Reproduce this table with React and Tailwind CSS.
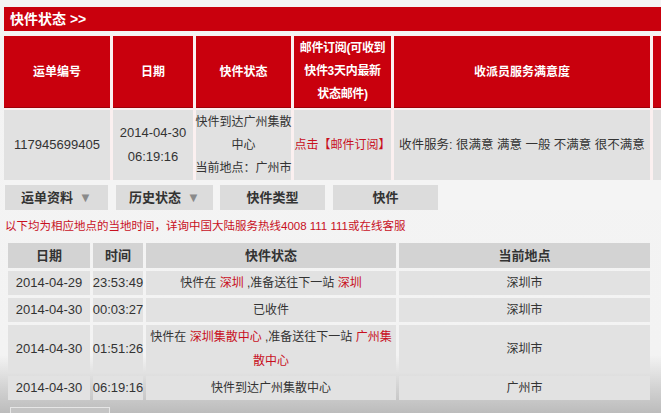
import React from 'react'

const cjk = { fontFamily: '"Liberation Sans", "Noto Sans CJK SC", sans-serif' }

const history = [
  { date: '2014-04-29', time: '23:53:49', status: <span>快件在 <span className="text-[#c8101e]">深圳</span> ,准备送往下一站 <span className="text-[#c8101e]">深圳</span></span>, place: '深圳市', h: 'h-[24px]' },
  { date: '2014-04-30', time: '00:03:27', status: <span>已收件</span>, place: '深圳市', h: 'h-[24px]' },
  { date: '2014-04-30', time: '01:51:26', status: <span>快件在 <span className="text-[#c8101e]">深圳集散中心</span> ,准备送往下一站 <span className="text-[#c8101e]">广州集<br />散中心</span></span>, place: '深圳市', h: 'h-[48px]' },
  { date: '2014-04-30', time: '06:19:16', status: <span>快件到达广州集散中心</span>, place: '广州市', h: 'h-[24px]' },
]

function App() {
  return (
    <div style={cjk} className="w-[661px] h-[413px] overflow-hidden bg-[linear-gradient(to_bottom,#f4f4f4_0%,#f3f3f3_86%,#d2d2d2_94%,#bcbcbc_100%)] text-[12px] text-[#333]">
      <div className="pt-[7px] pl-[4px]">
        <div className="h-[24px] bg-[#c9000d] text-white font-bold text-[14px] leading-[24px] pl-[6px]">快件状态 &gt;&gt;</div>

        <div className="mt-[4px] bg-[#fbf0f0] grid grid-cols-[106px_80px_95px_97px_256px_1fr] gap-x-[3px] gap-y-[2px] pt-[1px]">
          <div className="h-[72px] bg-[#c9000d] border-b border-[#9e0008] text-white font-bold flex items-center justify-center">运单编号</div>
          <div className="h-[72px] bg-[#c9000d] border-b border-[#9e0008] text-white font-bold flex items-center justify-center">日期</div>
          <div className="h-[72px] bg-[#c9000d] border-b border-[#9e0008] text-white font-bold flex items-center justify-center">快件状态</div>
          <div className="h-[72px] bg-[#c9000d] border-b border-[#9e0008] text-white font-bold flex items-center justify-center text-center leading-[23px] whitespace-nowrap tracking-[-0.3px]"><span>邮件订阅(可收到<br />快件3天内最新<br />状态邮件)</span></div>
          <div className="h-[72px] bg-[#c9000d] border-b border-[#9e0008] text-white font-bold flex items-center justify-center">收派员服务满意度</div>
          <div className="h-[72px] bg-[#c9000d] border-b border-[#9e0008]"></div>

          <div className="h-[70px] bg-[#e1e1e1] flex items-center justify-center text-[13px]">117945699405</div>
          <div className="h-[70px] bg-[#e1e1e1] flex items-center justify-center text-center leading-[24px] text-[13px]"><span>2014-04-30<br />06:19:16</span></div>
          <div className="h-[70px] bg-[#e1e1e1] flex items-center justify-center text-center leading-[23px] whitespace-nowrap"><span>快件到达广州集散<br />中心<br />当前地点：广州市</span></div>
          <div className="h-[70px] bg-[#e1e1e1] flex items-center justify-center text-[#c8101e] whitespace-nowrap">点击【邮件订阅】</div>
          <div className="h-[70px] bg-[#e1e1e1] flex items-center pl-[5px] whitespace-nowrap text-[12.5px]">收件服务: 很满意 满意 一般 不满意 很不满意</div>
          <div className="h-[70px] bg-[#e1e1e1]"></div>
        </div>

        <div className="bg-[#f4f4f4] flex pt-[5px] font-bold text-[13px]">
          <div className="w-[103px] h-[25px] ml-[1px] bg-[#dcdcdc] flex items-center justify-center gap-[6px]">运单资料 <span className="text-[#8a8a8a] text-[13px]">▼</span></div>
          <div className="w-[97px] h-[25px] ml-[8px] bg-[#dcdcdc] flex items-center justify-center gap-[6px]">历史状态 <span className="text-[#8a8a8a] text-[13px]">▼</span></div>
          <div className="w-[105px] h-[25px] ml-[7px] bg-[#dcdcdc] flex items-center justify-center">快件类型</div>
          <div className="w-[105px] h-[25px] ml-[8px] bg-[#dcdcdc] flex items-center justify-center">快件</div>
        </div>

        <div className="pt-[8px] pl-[1px] leading-[16px] text-[11.5px] text-[#c8101e] whitespace-nowrap">以下均为相应地点的当地时间，详询中国大陆服务热线4008 111 111或在线客服</div>

        <div className="mt-[9px] ml-[4px] w-[642px] grid grid-cols-[82px_50px_250px_1fr] gap-x-[3px] gap-y-[3px]">
          <div className="h-[25px] bg-[#d3d3d3] font-bold text-[13px] flex items-center justify-center">日期</div>
          <div className="h-[25px] bg-[#d3d3d3] font-bold text-[13px] flex items-center justify-center">时间</div>
          <div className="h-[25px] bg-[#d3d3d3] font-bold text-[13px] flex items-center justify-center">快件状态</div>
          <div className="h-[25px] bg-[#d3d3d3] font-bold text-[13px] flex items-center justify-center">当前地点</div>
          {history.map((r, i) => (
            <React.Fragment key={i}>
              <div className={`${r.h} bg-[#e2e2e2] flex items-center justify-center text-[13px]`}>{r.date}</div>
              <div className={`${r.h} bg-[#e2e2e2] flex items-center justify-center text-[13px]`}>{r.time}</div>
              <div className={`${r.h} bg-[#e2e2e2] flex items-center justify-center text-center leading-[24px] whitespace-nowrap`}>{r.status}</div>
              <div className={`${r.h} bg-[#e2e2e2] flex items-center justify-center`}>{r.place}</div>
            </React.Fragment>
          ))}
        </div>

        <div className="mt-[7px] ml-[6px] w-[100px] h-[10px] border border-[#e6e6e6] bg-[#c4c4c4]"></div>
      </div>
    </div>
  )
}

export default App
